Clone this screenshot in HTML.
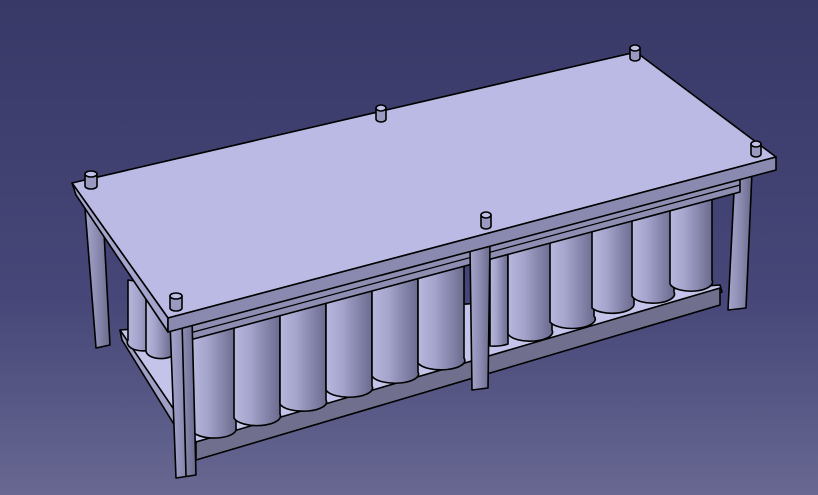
<!DOCTYPE html>
<html><head><style>
html,body{margin:0;padding:0;width:818px;height:495px;overflow:hidden}
</style></head><body>
<svg width="818" height="495" viewBox="0 0 818 495" xmlns="http://www.w3.org/2000/svg">
<defs>
<linearGradient id="bg" x1="0" y1="0" x2="0" y2="1">
<stop offset="0" stop-color="#393968"/>
<stop offset="0.6" stop-color="#464678"/>
<stop offset="1" stop-color="#686892"/>
</linearGradient>
<linearGradient id="cyl" x1="0" y1="0" x2="1" y2="0">
<stop offset="0" stop-color="#b8b8de"/>
<stop offset="0.35" stop-color="#a4a4cc"/>
<stop offset="1" stop-color="#6a6a8e"/>
</linearGradient>
<linearGradient id="leg" x1="0" y1="0" x2="1" y2="0">
<stop offset="0" stop-color="#a6a6cc"/>
<stop offset="0.5" stop-color="#8c8cb2"/>
<stop offset="1" stop-color="#6a6a8c"/>
</linearGradient>
</defs>
<rect width="818" height="495" fill="url(#bg)"/>
<g stroke="#000" stroke-width="1.6" stroke-linejoin="round">
<polygon points="84,195 102,195 110,345 96,348" fill="url(#leg)"/>
<polygon points="735,172 752,172 746,308 728,310" fill="url(#leg)"/>
<polygon points="120,330 720,285 722,292 196,442 122,340" fill="#c4c4ea"/>
<polygon points="120,330 196,442 196,460 122,340" fill="#a0a0c6"/>
<polygon points="196,442 720,288 720,305 196,460" fill="#70708e"/>
<path d="M128,280 L128,340 A15,8 0 0 0 158,345 L160,285 Z" fill="url(#cyl)"/>
<path d="M146,290 L146,350 A15,8 0 0 0 172,356 L172,295 Z" fill="url(#cyl)"/>
<g fill="url(#cyl)">
<path d="M192,330 L192,430 A22,9 0 0 0 236,428 L236,320 Z"/>
<path d="M234,322 L234,418 A22,9 0 0 0 280,414 L280,312 Z"/>
<path d="M280,312 L280,404 A23,9 0 0 0 326,400 L326,300 Z"/>
<path d="M326,300 L326,390 A23,9 0 0 0 372,386 L372,288 Z"/>
<path d="M372,288 L372,376 A23,9 0 0 0 418,372 L418,275 Z"/>
<path d="M418,275 L418,363 A23,9 0 0 0 464,358 L464,262 Z"/>
<path d="M490,255 L490,346 A22,9 0 0 0 508,344 L508,250 Z"/>
<path d="M508,250 L508,334 A22,9 0 0 0 552,330 L552,240 Z"/>
<path d="M550,240 L550,322 A22,9 0 0 0 594,316 L594,228 Z"/>
<path d="M592,228 L592,308 A22,9 0 0 0 634,304 L634,216 Z"/>
<path d="M632,216 L632,296 A21,9 0 0 0 674,292 L674,204 Z"/>
<path d="M670,204 L670,284 A21,9 0 0 0 712,280 L712,194 Z"/>
</g>
<!-- apron beam under plate -->
<polygon points="186,326 740,178 740,192 186,341" fill="#8e8eb2"/>
<line x1="186" y1="334" x2="740" y2="185" stroke-width="1.2"/>
<polygon points="470,248 490,244 488,388 472,390" fill="url(#leg)"/>
<polygon points="170,322 192,318 196,475 176,478" fill="url(#leg)"/>
<line x1="182" y1="320" x2="186" y2="476"/>
<polygon points="72,183 636,52 776,157 168,318" fill="#babae4"/>
<polygon points="72,183 168,318 168,332 76,195" fill="#a4a4cc"/>
<polygon points="168,318 776,157 776,170 168,332" fill="#8a8ab0"/>
<g fill="#9a9ac0">
<path d="M85,174 L85,186 A6,3 0 0 0 97,186 L97,174 Z"/><ellipse cx="91" cy="174" rx="6" ry="3" fill="#c0c0e6"/>
<path d="M170,296 L170,308 A6,3 0 0 0 182,308 L182,296 Z"/><ellipse cx="176" cy="296" rx="6" ry="3" fill="#c0c0e6"/>
<path d="M376,108 L376,119 A5,3 0 0 0 386,119 L386,108 Z"/><ellipse cx="381" cy="108" rx="5" ry="3" fill="#c0c0e6"/>
<path d="M481,215 L481,226 A5,3 0 0 0 491,226 L491,215 Z"/><ellipse cx="486" cy="215" rx="5" ry="3" fill="#c0c0e6"/>
<path d="M630,48 L630,58 A5,3 0 0 0 640,58 L640,48 Z"/><ellipse cx="635" cy="48" rx="5" ry="3" fill="#c0c0e6"/>
<path d="M751,144 L751,154 A5,3 0 0 0 761,154 L761,144 Z"/><ellipse cx="756" cy="144" rx="5" ry="3" fill="#c0c0e6"/>
</g>
</g>
</svg>
</body></html>
